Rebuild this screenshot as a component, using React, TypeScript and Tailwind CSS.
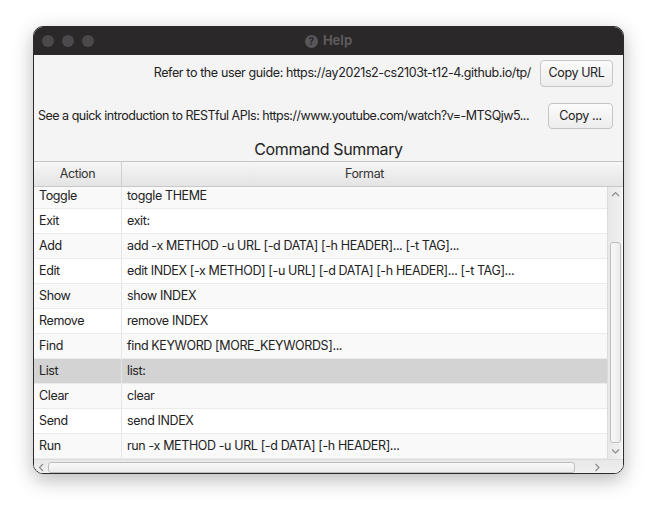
import React from "react";

const rows: [string, string][] = [
  ["Toggle", "toggle THEME"],
  ["Exit", "exit:"],
  ["Add", "add -x METHOD -u URL [-d DATA] [-h HEADER]... [-t TAG]..."],
  ["Edit", "edit INDEX [-x METHOD] [-u URL] [-d DATA] [-h HEADER]... [-t TAG]..."],
  ["Show", "show INDEX"],
  ["Remove", "remove INDEX"],
  ["Find", "find KEYWORD [MORE_KEYWORDS]..."],
  ["List", "list:"],
  ["Clear", "clear"],
  ["Send", "send INDEX"],
  ["Run", "run -x METHOD -u URL [-d DATA] [-h HEADER]..."],
];

function Chevron({ dir }: { dir: "up" | "down" | "left" | "right" }) {
  const d =
    dir === "up"
      ? "M1 5 L4.5 1.5 L8 5"
      : dir === "down"
      ? "M1 1.5 L4.5 5 L8 1.5"
      : dir === "left"
      ? "M5 1 L1.5 4.5 L5 8"
      : "M1.5 1 L5 4.5 L1.5 8";
  const w = dir === "up" || dir === "down" ? 9 : 7;
  const h = dir === "up" || dir === "down" ? 7 : 9;
  return (
    <svg width={w} height={h} viewBox={`0 0 ${w} ${h}`}>
      <path d={d} fill="none" stroke="#8a8a8a" strokeWidth="1.1" />
    </svg>
  );
}

export default function App() {
  return (
    <div
      className="w-[657px] h-[517px] bg-white pt-[26px] pl-[33px]"
      style={{ fontFamily: "Inter, 'Noto Sans', sans-serif" }}
    >
      <div className="w-[591px] h-[448px] rounded-[10px] overflow-hidden border border-[#2e2b2d] shadow-[0_6px_20px_rgba(0,0,0,0.28)] flex flex-col bg-[#f4f4f4]">
        {/* Title bar */}
        <div className="h-[28px] shrink-0 bg-[#2b282a] flex items-center relative">
          <div className="flex items-center gap-[8px] pl-[8px]">
            <div className="w-[12px] h-[12px] rounded-full bg-[#4c494c]" />
            <div className="w-[12px] h-[12px] rounded-full bg-[#4c494c]" />
            <div className="w-[12px] h-[12px] rounded-full bg-[#4c494c]" />
          </div>
          <div className="absolute inset-0 flex items-center justify-center gap-[5px] text-[13px] font-bold text-[#5d5a5d]">
            <span className="w-[13px] h-[13px] rounded-full bg-[#5a575a] text-[#2b282a] text-[10px] font-bold flex items-center justify-center leading-none">
              ?
            </span>
            <span>Help</span>
          </div>
        </div>

        {/* Content */}
        <div className="flex-1 flex flex-col text-[#222] tracking-[-0.38px]">
          <div className="h-[27px] mt-[5px] flex items-center justify-end pr-[10px] gap-[9px] text-[12.5px]">
            <span className="whitespace-nowrap">Refer to the user guide: https://ay2021s2-cs2103t-t12-4.github.io/tp/</span>
            <button className="w-[73px] h-[27px] rounded-[4px] border border-[#c6c6c6] bg-gradient-to-b from-[#fbfbfb] to-[#ededed] text-[12.5px] text-[#222]">
              Copy URL
            </button>
          </div>
          <div className="h-[26px] mt-[16px] flex items-center justify-between pl-[4px] pr-[10px] text-[12.5px]">
            <span className="whitespace-nowrap tracking-[-0.5px]">See a quick introduction to RESTful APIs: https://www.youtube.com/watch?v=-MTSQjw5...</span>
            <button className="w-[65px] h-[26px] rounded-[4px] border border-[#c6c6c6] bg-gradient-to-b from-[#fbfbfb] to-[#ededed] text-[12.5px] text-[#222]">
              Copy ...
            </button>
          </div>
          <div className="h-[20px] mt-[10px] flex items-center justify-center text-[16px] text-[#222]">
            Command Summary
          </div>

          {/* Table */}
          <div className="flex-1 mt-[2px] flex flex-col border-t border-[#c4c4c4] bg-white text-[12.5px]">
            <div className="h-[25px] shrink-0 flex bg-gradient-to-b from-[#f6f6f6] to-[#e4e4e4] border-b border-[#c8c8c8]">
              <div className="w-[88px] flex items-center justify-center border-r border-[#cfcfcf] text-[#333]">
                Action
              </div>
              <div className="w-[485px] flex items-center justify-center text-[#333]">Format</div>
              <div className="flex-1" />
            </div>
            <div className="flex-1 flex min-h-0">
              <div className="w-[573px] overflow-hidden">
                <div className="-mt-[3px]">
                  {rows.map(([a, f], i) => {
                    const sel = a === "List";
                    const bg = sel ? "bg-[#d3d3d3]" : i % 2 === 0 ? "bg-[#f9f9f9]" : "bg-white";
                    return (
                      <div key={a} className={`h-[25px] flex border-b border-[#ebebeb] ${bg}`}>
                        <div className="w-[88px] flex items-center pl-[5px] border-r border-[#e6e6e6] text-[#222]">
                          {a}
                        </div>
                        <div className="flex-1 flex items-center pl-[5px] text-[#222] whitespace-nowrap">
                          {f}
                        </div>
                      </div>
                    );
                  })}
                </div>
              </div>
              {/* vertical scrollbar */}
              <div className="w-[15px] flex flex-col items-center bg-gradient-to-r from-[#e8e8e8] to-[#f0f0f0] border-l border-[#dcdcdc]">
                <div className="h-[14px] flex items-center justify-center">
                  <Chevron dir="up" />
                </div>
                <div className="h-[41px]" />
                <div className="w-[11px] h-[201px] rounded-[3px] border border-[#bdbdbd] bg-gradient-to-r from-[#f8f8f8] to-[#ececec]" />
                <div className="flex-1 flex items-center justify-center">
                  <Chevron dir="down" />
                </div>
              </div>
            </div>
            {/* horizontal scrollbar */}
            <div className="h-[15px] shrink-0 flex items-center bg-gradient-to-b from-[#e8e8e8] to-[#f0f0f0] border-t border-[#dcdcdc]">
              <div className="w-[14px] flex items-center justify-center">
                <Chevron dir="left" />
              </div>
              <div className="w-[527px] h-[11px] rounded-[3px] border border-[#bdbdbd] bg-gradient-to-b from-[#f8f8f8] to-[#ececec]" />
              <div className="w-[32px] flex items-center justify-center pl-[12px]">
                <Chevron dir="right" />
              </div>
              <div className="flex-1" />
            </div>
          </div>
        </div>
      </div>
    </div>
  );
}
